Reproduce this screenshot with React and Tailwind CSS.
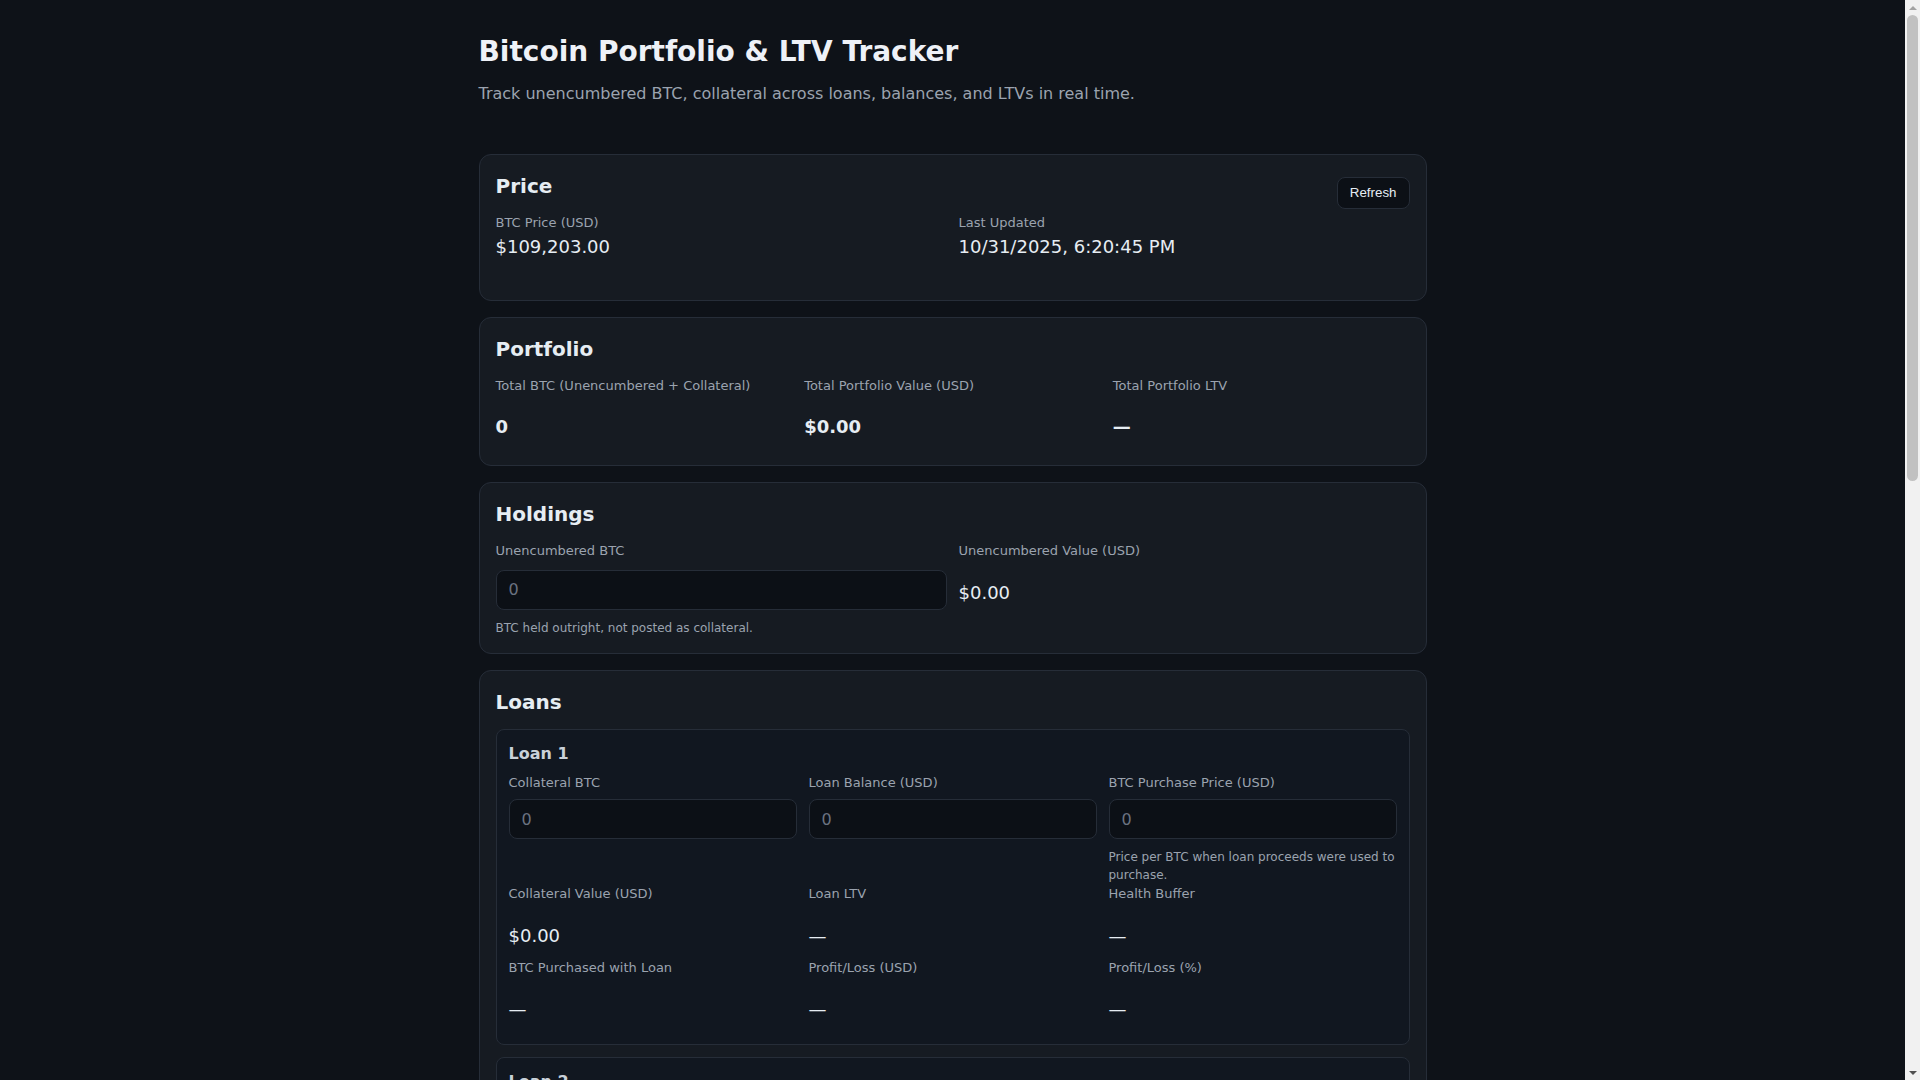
import { useState } from 'react';

const cardClass = 'rounded-xl border border-[#262d38] bg-[#161b22]';
const labelClass = 'text-[13px] leading-[19.5px] text-[#9ba3af]';
const inputClass =
  'block h-10 w-full rounded-lg border border-[#262d38] bg-[#0c1016] px-3 text-base text-[#e6edf3] placeholder:text-[#6b7280] outline-none';

function Stat({ label, value, bold }) {
  return (
    <div className="pb-[9px]">
      <div className={labelClass}>{label}</div>
      <div className={'mt-[18px] text-lg leading-[27px] text-[#e6edf3] ' + (bold ? 'font-bold' : '')}>
        {value}
      </div>
    </div>
  );
}

function Field({ label, hint, value, onChange }) {
  return (
    <div>
      <label className={'block ' + labelClass}>{label}</label>
      <input
        type="number"
        placeholder="0"
        value={value}
        onChange={(e) => onChange(e.target.value)}
        className={'mt-[7px] ' + inputClass}
      />
      {hint && <p className="mt-[9px] text-xs leading-[18px] text-[#9ba3af]">{hint}</p>}
    </div>
  );
}

function LoanCard({ index }) {
  const [collateral, setCollateral] = useState('');
  const [balance, setBalance] = useState('');
  const [buyPrice, setBuyPrice] = useState('');

  return (
    <div className="rounded-lg border border-[#262d38] bg-[#111720] px-3 pt-3 pb-[13px]">
      <h3 className="mb-[7px] text-base font-bold leading-6 text-[#c9d1d9]">Loan {index}</h3>
      <div className="grid grid-cols-3 gap-x-3">
        <Field label="Collateral BTC" value={collateral} onChange={setCollateral} />
        <Field label="Loan Balance (USD)" value={balance} onChange={setBalance} />
        <Field
          label="BTC Purchase Price (USD)"
          hint="Price per BTC when loan proceeds were used to purchase."
          value={buyPrice}
          onChange={setBuyPrice}
        />
        <Stat label="Collateral Value (USD)" value="$0.00" />
        <Stat label="Loan LTV" value="—" />
        <Stat label="Health Buffer" value="—" />
        <Stat label="BTC Purchased with Loan" value="—" />
        <Stat label="Profit/Loss (USD)" value="—" />
        <Stat label="Profit/Loss (%)" value="—" />
      </div>
    </div>
  );
}

// classic page scrollbar, as the browser drew it in the capture
function Scrollbar() {
  return (
    <div className="flex w-[15px] shrink-0 flex-col bg-[#f1f1f1]">
      <div className="flex h-[15px] items-center justify-center">
        <div className="h-0 w-0 border-x-4 border-b-4 border-x-transparent border-b-[#a3a3a3]" />
      </div>
      <div className="mx-[2px] h-[466px] rounded-full bg-[#c1c1c1]" />
      <div className="flex-1" />
      <div className="flex h-[15px] items-center justify-center">
        <div className="h-0 w-0 border-x-4 border-t-4 border-x-transparent border-t-[#505050]" />
      </div>
    </div>
  );
}

export default function App() {
  const [unencumbered, setUnencumbered] = useState('');

  return (
    <div className="flex h-screen bg-[#0e1218] font-['DejaVu_Sans',sans-serif] leading-[1.5] text-[#e6edf3]">
      <main className="min-w-0 flex-1 overflow-y-auto [scrollbar-width:none]">
        <div className="mx-auto max-w-[980px] px-4 pt-[31px] pb-10">
          <h1 className="mb-[9px] text-[28px] font-bold leading-[42px] text-[#eef1f7]">
            Bitcoin Portfolio &amp; LTV Tracker
          </h1>
          <p className="mb-[48px] text-base leading-6 text-[#9ba3af]">
            Track unencumbered BTC, collateral across loans, balances, and LTVs in real time.
          </p>

          <div className="flex flex-col gap-4">
            <section className={cardClass + ' px-4 pt-4 pb-[40px]'}>
              <div className="mb-3 flex h-[30px] items-start justify-between">
                <h2 className="text-xl font-bold leading-[30px]">Price</h2>
                <button className="mt-[6px] h-8 rounded-lg border border-[#262d38] bg-[#0c1016] px-3 font-['Liberation_Sans',Arial,sans-serif] text-[13.33px] text-[#e6edf3]">
                  Refresh
                </button>
              </div>
              <div className="grid grid-cols-2 gap-3">
                <div>
                  <div className={labelClass}>BTC Price (USD)</div>
                  <div className="text-lg leading-[27px]">$109,203.00</div>
                </div>
                <div>
                  <div className={labelClass}>Last Updated</div>
                  <div className="text-lg leading-[27px]">10/31/2025, 6:20:45 PM</div>
                </div>
              </div>
            </section>

            <section className={cardClass + ' p-4'}>
              <h2 className="mb-3 text-xl font-bold leading-[30px]">Portfolio</h2>
              <div className="grid grid-cols-3 gap-3">
                <Stat label="Total BTC (Unencumbered + Collateral)" value="0" bold />
                <Stat label="Total Portfolio Value (USD)" value="$0.00" bold />
                <Stat label="Total Portfolio LTV" value="—" bold />
              </div>
            </section>

            <section className={cardClass + ' p-4'}>
              <h2 className="mb-3 text-xl font-bold leading-[30px]">Holdings</h2>
              <div className="grid grid-cols-2 gap-3">
                <div>
                  <label className={'block ' + labelClass}>Unencumbered BTC</label>
                  <input
                    type="number"
                    placeholder="0"
                    value={unencumbered}
                    onChange={(e) => setUnencumbered(e.target.value)}
                    className={'mt-[9px] ' + inputClass}
                  />
                  <p className="mt-[9px] text-xs leading-[18px] text-[#9ba3af]">
                    BTC held outright, not posted as collateral.
                  </p>
                </div>
                <Stat label="Unencumbered Value (USD)" value="$0.00" />
              </div>
            </section>

            <section className={cardClass + ' p-4'}>
              <h2 className="mb-3 text-xl font-bold leading-[30px]">Loans</h2>
              <div className="flex flex-col gap-3">
                <LoanCard index={1} />
                <LoanCard index={2} />
              </div>
            </section>
          </div>
        </div>
      </main>
      <Scrollbar />
    </div>
  );
}
